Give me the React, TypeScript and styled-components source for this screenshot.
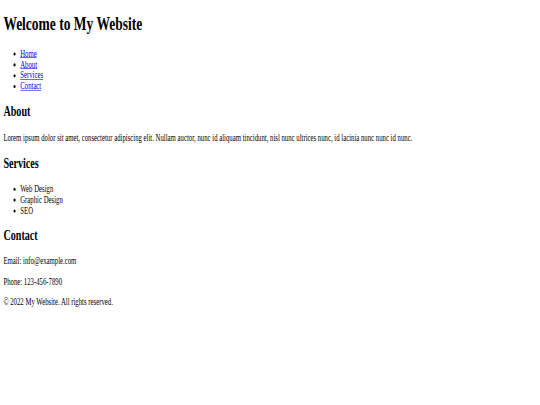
import React from "react";
import styled, { createGlobalStyle } from "styled-components";

const GlobalStyle = createGlobalStyle`
  html, body {
    margin: 0;
    padding: 0;
    background: #ffffff;
    overflow: hidden;
  }
`;

const Viewport = styled.div`
  width: 540px;
  height: 405px;
  overflow: hidden;
`;

const Stage = styled.div`
  display: flow-root;
  width: 1280px;
  transform: scale(0.421875, 0.6035);
  transform-origin: 0 0;
  font-family: "Liberation Serif", "Times New Roman", serif;
  font-size: 16px;
  color: #000000;
`;

const Page = styled.div`
  margin: 8px;
`;

const Header = styled.header``;

const Title = styled.h1`
  font-size: 2em;
  font-weight: bold;
  margin: 0.67em 0;
`;

const NavList = styled.ul`
  list-style: disc;
  margin: 1em 0;
  padding-left: 40px;
`;

const NavLink = styled.a`
  color: #0000ee;
  text-decoration: underline;
`;

const Section = styled.section``;

const Heading = styled.h2`
  font-size: 1.5em;
  font-weight: bold;
  margin: 0.83em 0;
`;

const Text = styled.p`
  margin: 1em 0;
`;

const ItemList = styled.ul`
  list-style: disc;
  margin: 1em 0;
  padding-left: 40px;
`;

const Footer = styled.footer``;

const navItems = ["Home", "About", "Services", "Contact"];
const services = ["Web Design", "Graphic Design", "SEO"];

export default function App() {
  return (
    <>
      <GlobalStyle />
      <Viewport>
        <Stage>
          <Page>
            <Header>
              <Title>Welcome to My Website</Title>
              <nav>
                <NavList>
                  {navItems.map((item) => (
                    <li key={item}>
                      <NavLink href={`#${item.toLowerCase()}`}>{item}</NavLink>
                    </li>
                  ))}
                </NavList>
              </nav>
            </Header>
            <Section id="about">
              <Heading>About</Heading>
              <Text>
                Lorem ipsum dolor sit amet, consectetur adipiscing elit. Nullam auctor, nunc id aliquam tincidunt, nisl nunc ultrices nunc, id lacinia nunc nunc id nunc.
              </Text>
            </Section>
            <Section id="services">
              <Heading>Services</Heading>
              <ItemList>
                {services.map((s) => (
                  <li key={s}>{s}</li>
                ))}
              </ItemList>
            </Section>
            <Section id="contact">
              <Heading>Contact</Heading>
              <Text>Email: info@example.com</Text>
              <Text>Phone: 123-456-7890</Text>
            </Section>
            <Footer>
              <Text>© 2022 My Website. All rights reserved.</Text>
            </Footer>
          </Page>
        </Stage>
      </Viewport>
    </>
  );
}
